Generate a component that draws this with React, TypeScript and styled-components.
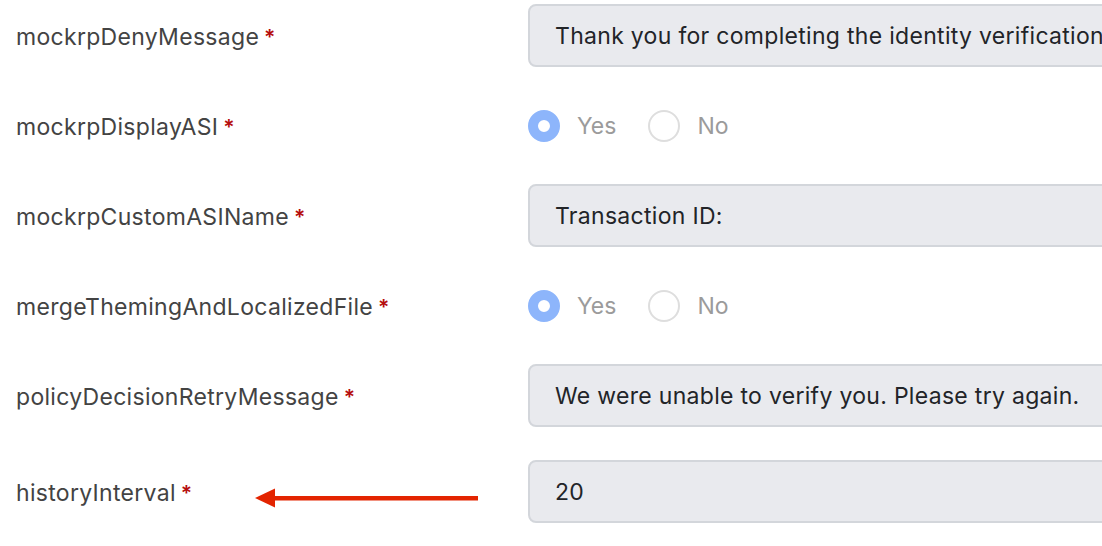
import styled, { createGlobalStyle } from "styled-components";

const GlobalStyle = createGlobalStyle`
	html, body {
		margin: 0;
		padding: 0;
		background: #ffffff;
		overflow: hidden;
	}
	body {
		font-family: Inter, "Liberation Sans", Arial, sans-serif;
	}
`;

const Form = styled.div`
	padding: 4px 0 0 16px;
	width: 1300px;
`;

const Row = styled.div`
	position: relative;
	display: grid;
	grid-template-columns: 512px 1fr;
	align-items: center;
	margin-bottom: 33px;
`;

const Label = styled.label`
	font-size: 23px;
	letter-spacing: 0.3px;
	color: #434343;
	display: flex;
	align-items: baseline;
	gap: 5px;
	padding-top: 2px;
`;

const Required = styled.span`
	color: #b50d0d;
	font-weight: 600;
	font-size: 21px;
`;

const TextField = styled.input`
	box-sizing: border-box;
	width: 760px;
	height: 63px;
	padding: 0 25px;
	font-family: inherit;
	font-size: 23px;
	letter-spacing: 0.3px;
	color: #222428;
	background: #e9eaee;
	border: 2px solid #d3d6db;
	border-radius: 8px;
	outline: none;
`;

const RadioGroup = styled.div`
	display: flex;
	align-items: center;
	height: 51px;
	gap: 32px;
`;

const RadioOption = styled.span`
	display: flex;
	align-items: center;
	gap: 17px;
	font-size: 23px;
	color: #9b9b9b;
`;

const RadioDot = styled.span<{ $checked?: boolean }>`
	box-sizing: border-box;
	width: 32px;
	height: 32px;
	border-radius: 50%;
	background: #ffffff;
	border: ${(p) => (p.$checked ? "10px solid #8db5fb" : "2px solid #dedede")};
`;

const Arrow = styled.svg`
	position: absolute;
	left: 239px;
	top: 28px;
`;

type Field =
	| { name: string; kind: "text"; value: string; arrow?: boolean }
	| { name: string; kind: "yesno" };

const fields: Field[] = [
	{
		name: "mockrpDenyMessage",
		kind: "text",
		value: "Thank you for completing the identity verification process.",
	},
	{ name: "mockrpDisplayASI", kind: "yesno" },
	{ name: "mockrpCustomASIName", kind: "text", value: "Transaction ID:" },
	{ name: "mergeThemingAndLocalizedFile", kind: "yesno" },
	{
		name: "policyDecisionRetryMessage",
		kind: "text",
		value: "We were unable to verify you. Please try again.",
	},
	{ name: "historyInterval", kind: "text", value: "20", arrow: true },
];

const App = () => {
	return (
		<>
			<GlobalStyle />
			<Form>
				{fields.map((f) => (
					<Row key={f.name}>
						<Label>
							{f.name}
							<Required>*</Required>
						</Label>
						{f.kind === "text" ? (
							<TextField readOnly defaultValue={f.value} />
						) : (
							<RadioGroup>
								<RadioOption>
									<RadioDot $checked />
									Yes
								</RadioOption>
								<RadioOption>
									<RadioDot />
									No
								</RadioOption>
							</RadioGroup>
						)}
						{f.kind === "text" && f.arrow && (
							<Arrow width="225" height="20" viewBox="0 0 225 20">
								<path d="M0 10 L20 0.5 L20 19.5 Z" fill="#e32400" />
								<rect x="18" y="8" width="205" height="4.5" fill="#e32400" />
							</Arrow>
						)}
					</Row>
				))}
			</Form>
		</>
	);
};

export default App;
